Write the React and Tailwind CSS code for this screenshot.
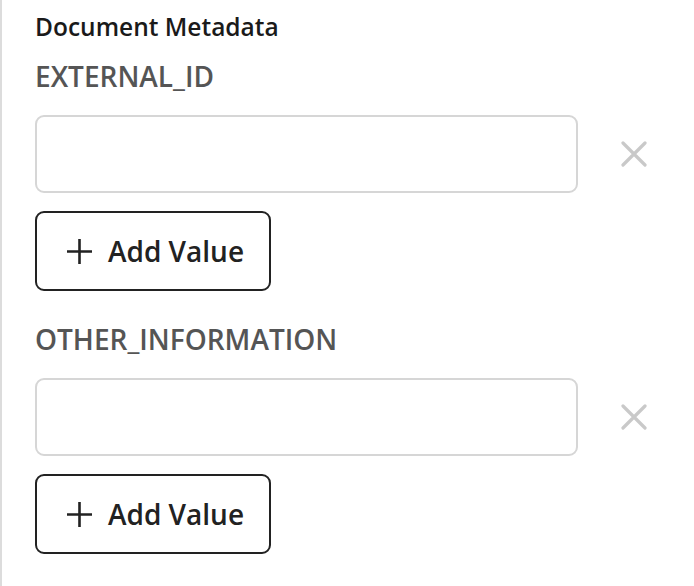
import React from "react";

function XIcon() {
  return (
    <svg width="26" height="26" viewBox="0 0 26 26" fill="none">
      <path d="M2 2 L24 24 M24 2 L2 24" stroke="#c9c9c9" strokeWidth="3.2" strokeLinecap="round" />
    </svg>
  );
}

function PlusIcon() {
  return (
    <svg width="27" height="27" viewBox="0 0 27 27" fill="none">
      <path d="M13.5 1 V26 M1 13.5 H26" stroke="#222" strokeWidth="2.6" />
    </svg>
  );
}

function Field({ label }) {
  return (
    <div className="flex flex-col">
      <div className="text-[28px] leading-[38px] font-semibold text-[#555555]">{label}</div>
      <div className="mt-[20px] flex items-center">
        <div className="w-[543px] h-[78px] rounded-[9px] border-2 border-[#d6d6d6] bg-white" />
        <div className="ml-[43px] flex items-center justify-center">
          <XIcon />
        </div>
      </div>
      <button className="mt-[18px] w-[236px] h-[80px] rounded-[9px] border-2 border-[#222222] bg-white flex items-center justify-center gap-[15px] pl-[4px] text-[28px] font-semibold text-[#222222]">
        <PlusIcon />
        <span>Add Value</span>
      </button>
    </div>
  );
}

export default function App() {
  return (
    <div
      className="w-[694px] h-[586px] bg-white border-l-2 border-[#dcdcdc] pl-[33px] pt-[11px]"
      style={{ fontFamily: "'Open Sans', sans-serif" }}
    >
      <div className="text-[24.5px] leading-[32px] font-semibold text-[#1a1a1a]">Document Metadata</div>
      <div className="mt-[14px] flex flex-col gap-[29px]">
        <Field label="EXTERNAL_ID" />
        <Field label="OTHER_INFORMATION" />
      </div>
    </div>
  );
}
